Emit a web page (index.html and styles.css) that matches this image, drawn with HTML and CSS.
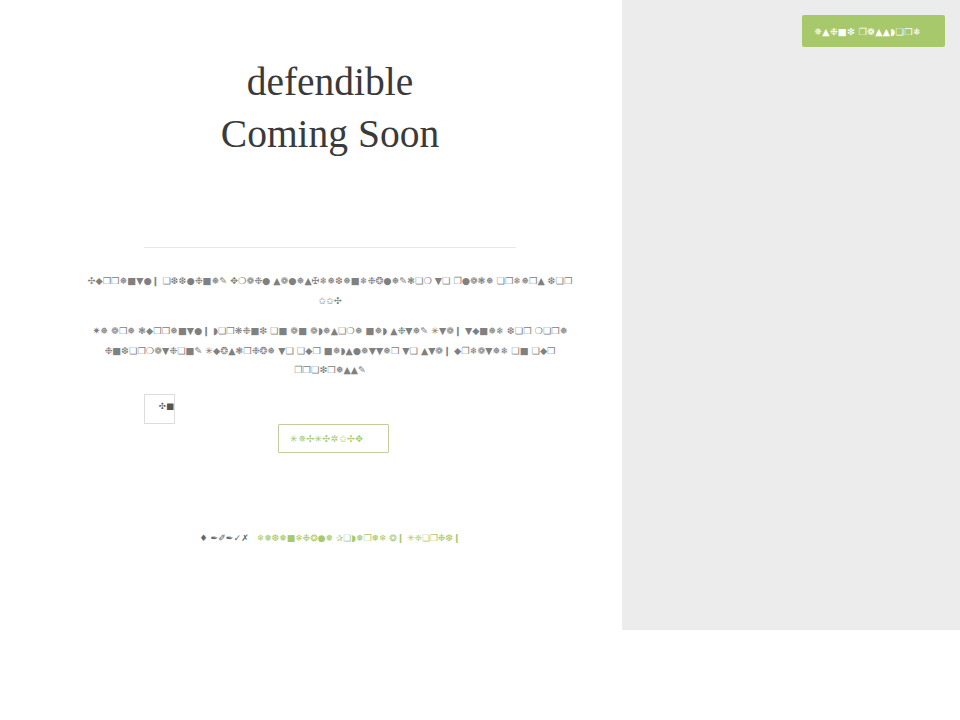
FILE: index.html
```html
<!DOCTYPE html>
<html lang="en">
<head>
<meta charset="utf-8">
<title>defendible</title>
<link rel="stylesheet" href="styles.css">
</head>
<body>
<div class="page">
  <main class="main">
    <h1 class="title">defendible<br>Coming Soon</h1>
    <hr class="rule">
    <p class="copy">✣◆❒❒❅■▼●❙ ❏❆❆●❉■❅✎ ✥❍❁❉● ▲❁●❅▲✠❄❅❆❅■❄❉❂●❅✎❃❏❍ ▼❏ ❐●❁❃❅ ❏❒❄❅❒▲ ❆❏❒<br>✩✩✣</p>
    <p class="copy">✷❅ ❁❒❅ ❃◆❒❒❅■▼●❙ ◗❏❒❋❉■❇ ❏■ ❁■ ❁◗❅▲❏❍❅ ■❅◗ ▲❉▼❅✎ ✳▼❁❙ ▼◆■❅❄ ❆❏❒ ❍❏❒❅<br>❉■❆❏❒❍❁▼❉❏■✎ ✳◆❂▲❃❒❉❂❅ ▼❏ ❏◆❒ ■❅◗▲●❅▼▼❅❒ ▼❏ ▲▼❁❙ ◆❐❄❁▼❅❄ ❏■ ❏◆❒<br>❐❒❏❇❒❅▲▲✎</p>
    <form class="signup">
      <div class="field">✣■</div>
      <button class="subscribe" type="button">✳✵✢✳✣✲✩✢✥</button>
    </form>
    <p class="legal">♦ ✒✐✒✓✗ <a class="legal-link">❄❅❆❅■❄❉❂●❅ ✰❏◗❅❒❅❄ ❂❙ ✳❈❏❐❉❆❙</a></p>
  </main>
  <aside class="side">
    <button class="login" type="button">✵▲❉■❇ ❐❁▲▲◗❏❒❄</button>
  </aside>
</div>
</body>
</html>
```
FILE: styles.css
```css
html, body {
  margin: 0;
  padding: 0;
  background: #fff;
}
body {
  font-family: "DejaVu Sans", sans-serif;
}
.page {
  display: flex;
  width: 960px;
  height: 630px;
}
.main {
  width: 584px;
  padding: 56px 0 0 38px;
  text-align: center;
}
.title {
  margin: 0;
  font-family: "Liberation Serif", serif;
  font-size: 39.5px;
  line-height: 52px;
  font-weight: 400;
  color: #3a3a3a;
}
.rule {
  width: 372px;
  height: 1px;
  margin: 87px auto 23px;
  border: 0;
  background: #e8e8e8;
}
.copy {
  margin: 0 0 11px;
  font-size: 9.4px;
  line-height: 19.5px;
  color: #808080;
}
.signup {
  width: 372px;
  margin: 14px auto 0;
}
.field {
  box-sizing: border-box;
  width: 31px;
  height: 30px;
  border: 1px solid #ddd;
  font-size: 8.5px;
  line-height: 22px;
  text-align: right;
  color: #555;
}
.subscribe {
  display: block;
  box-sizing: border-box;
  width: 111px;
  height: 29px;
  margin: 0 0 0 134px;
  padding: 0 0 0 11px;
  border: 1px solid #c3cd9d;
  border-radius: 1px;
  background: #fff;
  font-family: inherit;
  font-size: 9.4px;
  letter-spacing: 0.3px;
  text-align: left;
  color: #a8c96b;
}
.legal {
  margin: 77px 0 0;
  font-size: 9px;
  line-height: 16px;
  letter-spacing: 0.1px;
  color: #666;
}
.legal-link {
  margin-left: 5px;
  letter-spacing: -0.05px;
  color: #a8c96b;
}
.side {
  display: flex;
  flex: 1;
  justify-content: flex-end;
  align-items: flex-start;
  padding: 15px 15px 0 0;
  background: #ececec;
}
.login {
  width: 143px;
  height: 32px;
  padding: 0 0 0 12px;
  border: 0;
  border-radius: 2px;
  background: #a8c96b;
  font-family: inherit;
  font-size: 9.4px;
  letter-spacing: 0.3px;
  text-align: left;
  color: #fff;
}
```
